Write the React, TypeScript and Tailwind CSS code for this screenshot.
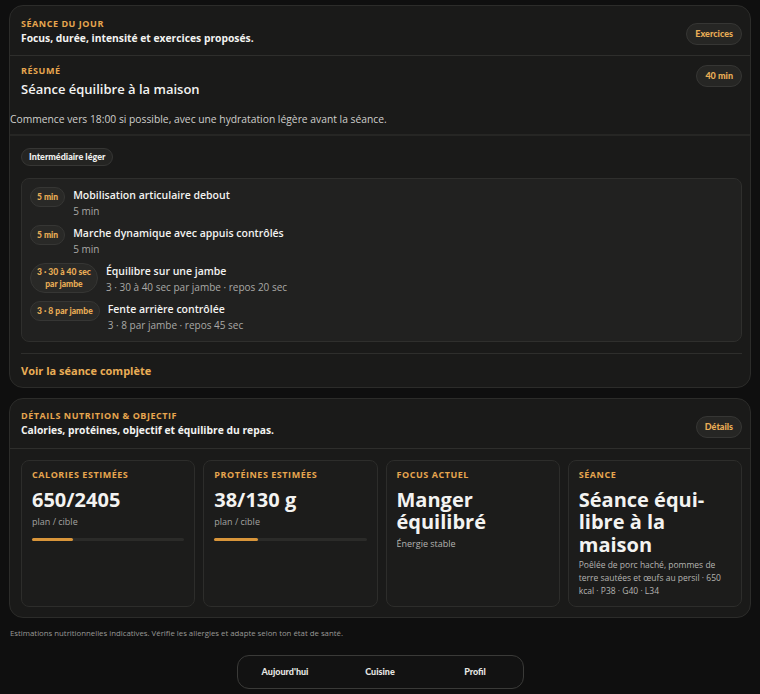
import React from "react";

const body = { fontFamily: "'Open Sans', 'Noto Sans', sans-serif" };
const pillFont = { fontFamily: "Lato, 'Noto Sans', sans-serif" };

const exercises = [
  { badge: "5 min", title: "Mobilisation articulaire debout", sub: "5 min" },
  { badge: "5 min", title: "Marche dynamique avec appuis contrôlés", sub: "5 min" },
  { badge: "3 · 30 à 40 sec\npar jambe", title: "Équilibre sur une jambe", sub: "3 · 30 à 40 sec par jambe · repos 20 sec" },
  { badge: "3 · 8 par jambe", title: "Fente arrière contrôlée", sub: "3 · 8 par jambe · repos 45 sec" },
];

function Pill({ children }: { children: React.ReactNode }) {
  return (
    <span
      style={pillFont}
      className="inline-flex items-center rounded-full border border-[#363634] bg-[#262624] px-[8px] h-[22px] text-[9px] font-black whitespace-nowrap text-[#e9ad56]"
    >
      {children}
    </span>
  );
}

function Label({ children }: { children: React.ReactNode }) {
  return <div className="text-[9px] font-bold tracking-[0.06em] uppercase text-[#e7a64f] leading-[12px]">{children}</div>;
}

export default function App() {
  return (
    <div style={body} className="min-h-[694px] w-[760px] bg-[#0f0f0f] text-[#f3f3f1] pt-[5px] px-[9px] overflow-hidden">
      {/* Séance du jour */}
      <section className="rounded-[14px] border border-[#2c2c2a] bg-[#1a1a19] overflow-hidden">
        <div className="flex items-start justify-between pl-[11px] pr-[8px] pt-[12px] pb-[10px] border-b border-[#2e2e2c]">
          <div>
            <Label>Séance du jour</Label>
            <div className="text-[10.3px] font-bold leading-[14px] mt-[1px]">Focus, durée, intensité et exercices proposés.</div>
          </div>
          <div className="pt-[1px]">
            <Pill>Exercices</Pill>
          </div>
        </div>

        <div className="border-b-2 border-[#262624]">
          <div className="flex items-start justify-between pl-[11px] pr-[8px] pt-[9px]">
            <div>
              <Label>Résumé</Label>
              <div className="text-[13px] font-semibold leading-[18px] mt-[3px]">Séance équilibre à la maison</div>
            </div>
            <Pill>40 min</Pill>
          </div>
          <p className="text-[10.3px] text-[#cfcfcc] leading-[14px] mt-[14px] pb-[8px]">
            Commence vers 18:00 si possible, avec une hydratation légère avant la séance.
          </p>
        </div>

        <div className="pl-[11px] pr-[8px] pt-[12px] flex flex-col">
          <div className="flex">
            <span
              style={pillFont}
              className="inline-flex items-center rounded-full border border-[#363634] bg-[#242422] px-[7px] h-[18px] text-[9px] font-black text-[#f0f0ee]"
            >
              Intermédiaire léger
            </span>
          </div>

          <div className="mt-[12px] rounded-[8px] border border-[#2f2f2d] bg-[#212120] px-[8px] pt-[7px] pb-[9px] flex flex-col gap-[6px]">
            {exercises.map((e, i) => (
              <div key={i} className="flex items-start gap-[8px]">
                <span
                  style={pillFont}
                  className="inline-flex items-center justify-center text-center rounded-full border border-[#363634] bg-[#292927] px-[6px] min-h-[20px] py-[2px] text-[8.5px] leading-[12px] font-black text-[#e9ad56] whitespace-pre-line mt-[1px]"
                >
                  {e.badge}
                </span>
                <div>
                  <div className="text-[10.5px] font-semibold leading-[14px] pt-[2px]">{e.title}</div>
                  <div className="text-[10px] text-[#a9a9a6] leading-[14px] mt-[2px]">{e.sub}</div>
                </div>
              </div>
            ))}
          </div>

          <div className="mt-[11px] border-t border-[#2e2e2c] pt-[9px] pb-[9px] text-[11px] leading-[15px] font-bold text-[#e9ad56]">
            Voir la séance complète
          </div>
        </div>
      </section>

      {/* Nutrition */}
      <section className="mt-[10px] rounded-[14px] border border-[#2c2c2a] bg-[#1a1a19] overflow-hidden">
        <div className="flex items-start justify-between pl-[11px] pr-[8px] pt-[11px] pb-[10px] border-b border-[#2e2e2c]">
          <div>
            <Label>Détails nutrition &amp; objectif</Label>
            <div className="text-[10.3px] font-bold leading-[14px] mt-[1px]">Calories, protéines, objectif et équilibre du repas.</div>
          </div>
          <div className="pt-[2px]">
            <Pill>Détails</Pill>
          </div>
        </div>

        <div className="grid grid-cols-4 gap-[8px] pl-[11px] pr-[8px] pt-[11px] pb-[10px]">
          {[
            { label: "Calories estimées", value: "650/2405", pct: 27 },
            { label: "Protéines estimées", value: "38/130 g", pct: 29 },
          ].map((c) => (
            <div key={c.label} className="h-[147px] rounded-[8px] border border-[#2d2d2b] bg-[#1c1c1b] px-[10px] pt-[8px]">
              <Label>{c.label}</Label>
              <div className="text-[20px] font-bold leading-[24px] mt-[7px]">{c.value}</div>
              <div className="text-[9px] text-[#a3a3a0] leading-[12px] mt-[4px]">plan / cible</div>
              <div className="mt-[10px] h-[3px] rounded-full bg-[#2b2b29]">
                <div className="h-full rounded-full bg-[#d8953a]" style={{ width: `${c.pct}%` }} />
              </div>
            </div>
          ))}
          <div className="h-[147px] rounded-[8px] border border-[#2d2d2b] bg-[#1c1c1b] px-[10px] pt-[8px]">
            <Label>Focus actuel</Label>
            <div className="text-[20px] font-bold leading-[22px] mt-[8px]">Manger équilibré</div>
            <div className="text-[9px] text-[#b4b4b1] leading-[12px] mt-[5px]">Énergie stable</div>
          </div>
          <div className="h-[147px] rounded-[8px] border border-[#2d2d2b] bg-[#1c1c1b] px-[10px] pt-[8px]">
            <Label>Séance</Label>
            <div className="text-[20px] font-bold leading-[22.5px] mt-[8px]">Séance équi-libre à la maison</div>
            <div className="text-[8.5px] text-[#b4b4b1] leading-[13px] mt-[2px]">
              Poêlée de porc haché, pommes de terre sautées et œufs au persil · 650 kcal · P38 · G40 · L34
            </div>
          </div>
        </div>
      </section>

      <p className="text-[7.8px] text-[#9a9a97] mt-[10px] ml-[1px] leading-[11px]">
        Estimations nutritionnelles indicatives. Vérifie les allergies et adapte selon ton état de santé.
      </p>

      <nav
        style={pillFont}
        className="mx-auto mt-[16px] w-[287px] h-[34px] rounded-[12px] border border-[#3a3a38] bg-[#121212] grid grid-cols-3 items-center text-center text-[9px] font-black text-[#e6e6e3]"
      >
        <span>Aujourd'hui</span>
        <span>Cuisine</span>
        <span>Profil</span>
      </nav>
    </div>
  );
}
